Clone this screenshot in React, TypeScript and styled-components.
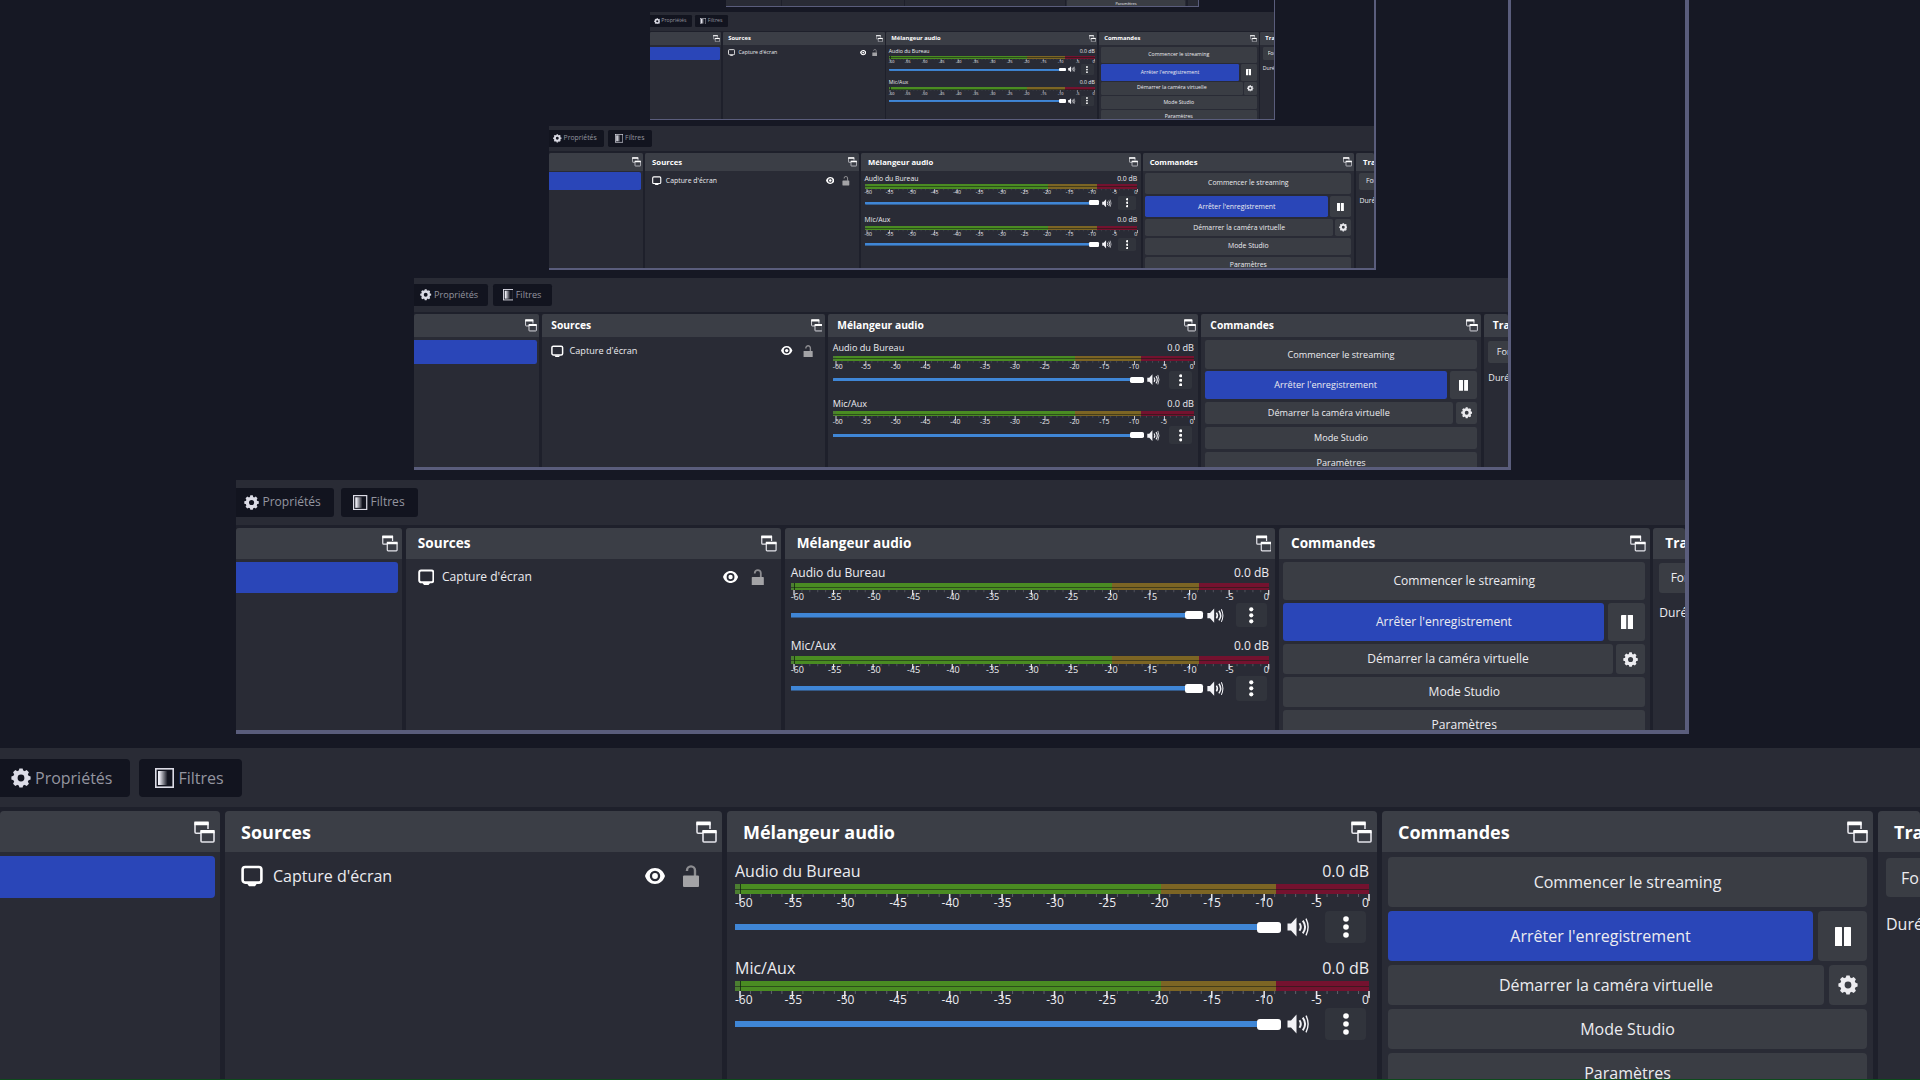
import React, { useId } from "react";
import styled, { createGlobalStyle, css } from "styled-components";

const color = {
  backdrop: "#161824",
  window: "#1e202b",
  panel: "#292b35",
  header: "#3b3e46",
  button: "#3a3d44",
  menuButton: "#31343c",
  toolButton: "#12141f",
  accent: "#2a46b8",
  text: "#ececf0",
  muted: "#94959f",
  frame: "#5a5d7c",
  slider: "#3f86d6",
};

/* Size of the captured screen inside the preview, relative to the screen itself. */
const CAPTURE_RATIO = 0.7547;
const CAPTURE_DEPTH = 5;

const GlobalStyle = createGlobalStyle`
  * { box-sizing: border-box; }
  body {
    margin: 0;
    background: ${color.backdrop};
    color: ${color.text};
    font-family: "Open Sans", "Noto Sans", sans-serif;
    font-size: 16px;
    line-height: 24px;
    overflow: hidden;
  }
  button, input, select { font: inherit; color: inherit; margin: 0; }
`;

const Screen = styled.div<{ $captured?: boolean }>`
  display: flex;
  flex-direction: column;
  flex: none;
  overflow: hidden;
  width: 100%;
  background: ${color.backdrop};
  ${(p) =>
    p.$captured
      ? css`
          zoom: ${CAPTURE_RATIO};
          aspect-ratio: 16 / 9;
        `
      : css`
          height: 100vh;
          border-bottom: 1px solid #0d4a1c;
        `}
`;

const Preview = styled.main`
  flex: 1;
  min-height: 0;
  overflow: hidden;
  display: flex;
  flex-direction: column;
  justify-content: flex-end;
  padding: 0 231px 14px 236px;
`;

const CaptureFrame = styled.div`
  flex: none;
  border: solid ${color.frame};
  border-width: 0 4px 4px 0;
`;

const Toolbar = styled.div`
  flex: none;
  display: flex;
  align-items: center;
  gap: 9px;
  height: 59px;
  background: ${color.panel};
`;

const ToolButton = styled.button<{ $flush?: boolean }>`
  display: flex;
  align-items: center;
  gap: 4px;
  height: 38px;
  padding: 0 18px 0 ${(p) => (p.$flush ? 11 : 16)}px;
  border: 0;
  border-radius: ${(p) => (p.$flush ? "0 4px 4px 0" : "4px")};
  background: ${color.toolButton};
  color: ${color.muted};
  svg { color: #dcdce6; }
`;

const Docks = styled.div`
  flex: none;
  display: grid;
  grid-template-columns:
    minmax(0, 220fr) minmax(0, 497fr) minmax(0, 650fr)
    minmax(0, 491fr) minmax(0, 42fr);
  gap: 5px;
  height: 272px;
  padding-top: 4px;
  background: ${color.window};
`;

const Dock = styled.section`
  min-width: 0;
  overflow: hidden;
  border-radius: 4px 4px 0 0;
  background: ${color.panel};
`;

const DockInner = styled.div<{ $min?: number }>`
  min-width: ${(p) => p.$min ?? 0}px;
`;

const DockHeader = styled.header`
  display: flex;
  align-items: center;
  justify-content: space-between;
  height: 41px;
  padding: 0 5px 0 16px;
  background: ${color.header};
`;

const DockTitle = styled.h2`
  margin: 0;
  font-size: 18px;
  font-weight: 700;
  color: #fff;
  white-space: nowrap;
`;

const IconButton = styled.button`
  display: flex;
  padding: 0;
  border: 0;
  background: none;
`;

const SceneItem = styled.button`
  display: block;
  width: calc(100% - 5px);
  height: 42px;
  margin-top: 4px;
  border: 0;
  border-radius: 0 4px 4px 0;
  background: ${color.accent};
`;

const SourceRow = styled.div`
  display: flex;
  align-items: center;
  height: 40px;
  margin-top: 4px;
  padding: 0 22px 0 16px;
`;

const SourceName = styled.span`
  flex: 1;
  margin-left: 10px;
`;

const SourceTools = styled.div`
  display: flex;
  align-items: center;
  gap: 17px;
`;

const Mixer = styled.div`
  display: flex;
  flex-direction: column;
  gap: 4px;
  padding: 7px 8px 0;
`;

const Channel = styled.div`
  height: 93px;
`;

const ChannelHead = styled.div`
  display: flex;
  justify-content: space-between;
  margin-bottom: 1px;
`;

const Meter = styled.div`
  position: relative;
  display: grid;
  grid-template-columns: 5px 1px 421fr 116fr 93fr;
  height: 10px;
  &::after {
    content: "";
    position: absolute;
    inset: 5px 0 auto;
    height: 1px;
    background: rgba(20, 30, 20, 0.55);
  }
`;

const MeterZone = styled.span<{ $tone: string }>`
  background: ${(p) => p.$tone};
`;

const Ticks = styled.svg`
  display: block;
  width: calc(100% - 5px);
  height: 7px;
  margin: 0 0 -7px 5px;
  overflow: visible;
`;

const Scale = styled.div`
  display: flex;
  justify-content: space-between;
  padding: 1px 0 0 6px;
  font-size: 12px;
  line-height: 16px;
`;

const ScaleMark = styled.span`
  display: flex;
  justify-content: center;
  width: 0;
  &:first-child { justify-content: flex-start; margin-left: -6px; margin-right: 6px; }
  &:last-child { justify-content: flex-end; }
`;

const VolumeRow = styled.div`
  display: flex;
  align-items: center;
  height: 32px;
  padding-right: 3px;
`;

const Volume = styled.input`
  flex: 1;
  min-width: 0;
  height: 12px;
  appearance: none;
  background: linear-gradient(${color.slider}, ${color.slider}) center / 100% 6px no-repeat;
  border-radius: 3px;
  &::-webkit-slider-thumb {
    appearance: none;
    width: 24px;
    height: 11px;
    border-radius: 3px;
    background: #fff;
  }
`;

const MuteButton = styled(IconButton)`
  margin: 0 15px 0 6px;
`;

const MenuButton = styled(IconButton)`
  align-items: center;
  justify-content: center;
  width: 41px;
  height: 32px;
  border-radius: 4px;
  background: ${color.menuButton};
`;

const Commands = styled.div`
  display: flex;
  flex-direction: column;
  gap: 4px;
  padding: 5px 6px 0;
`;

const CommandRow = styled.div`
  display: flex;
  gap: 5px;
`;

const Command = styled.button<{ $tall?: boolean; $active?: boolean }>`
  flex: none;
  height: ${(p) => (p.$tall ? 50 : 40)}px;
  padding: 0;
  border: 0;
  border-radius: 4px;
  background: ${(p) => (p.$active ? color.accent : color.button)};
  ${CommandRow} > &:first-child { flex: 1; }
`;

const SideCommand = styled(Command)<{ $width: number }>`
  display: flex;
  align-items: center;
  justify-content: center;
  width: ${(p) => p.$width}px;
`;

const Transition = styled.div`
  display: flex;
  flex-direction: column;
  gap: 15px;
  padding: 6px 9px 0 8px;
`;

const TransitionSelect = styled.select`
  appearance: none;
  height: 39px;
  padding: 0 15px;
  border: 0;
  border-radius: 4px;
  background: ${color.button};
`;

const Gear = () => (
  <svg width="20" height="20" viewBox="0 0 20 20" fill="currentColor" aria-hidden="true">
    <circle cx="10" cy="10" r="5.6" fill="none" stroke="currentColor" strokeWidth="4.4" />
    {[0, 45, 90, 135, 180, 225, 270, 315].map((a) => (
      <path key={a} d="M7.6 3.2 8.4 0.4h3.2L12.4 3.2z" transform={`rotate(${a} 10 10)`} />
    ))}
  </svg>
);

const FilterIcon = () => {
  const id = useId();
  return (
    <svg width="19" height="20" viewBox="0 0 19 20" aria-hidden="true">
      <defs>
        <linearGradient id={id}>
          <stop offset="0.1" stopColor="#f0f0f8" />
          <stop offset="0.8" stopColor="#12141f" />
        </linearGradient>
      </defs>
      <rect x="0.8" y="0.8" width="17.4" height="18.4" fill="none" stroke="currentColor" strokeWidth="1.6" />
      <rect x="3" y="3" width="12" height="14" fill={`url(#${id})`} />
    </svg>
  );
};

const FloatIcon = () => (
  <svg width="21" height="22" viewBox="0 0 21 22" aria-hidden="true" fill="none" stroke="#e4e4ea" strokeWidth="1.6">
    <path d="M7 12.2H2.2a1.2 1.2 0 0 1-1.2-1.2V2h13v6" />
    <path d="M0.4 2.4h14.2" stroke="#fff" strokeWidth="3.6" />
    <rect x="7" y="10" width="13" height="11" rx="1" />
    <path d="M6.4 10.6h14.2" stroke="#fff" strokeWidth="3.2" />
  </svg>
);

const MonitorIcon = () => (
  <svg width="22" height="22" viewBox="0 0 22 22" aria-hidden="true">
    <rect x="1.6" y="2" width="18.8" height="15.6" rx="2.6" fill="none" stroke="#fff" strokeWidth="2.6" />
    <path d="M6 18.4h10l-2 2.8H8z" fill="#fff" />
  </svg>
);

const EyeIcon = () => (
  <svg width="20" height="16" viewBox="0 0 20 16" aria-hidden="true">
    <path
      fillRule="evenodd"
      fill="#fff"
      d="M10 0C5.200 0 1.600 3.200 0 8c1.600 4.800 5.200 8 10 8s8.400-3.200 10-8c-1.600-4.800-5.200-8-10-8zm0 2.800a5.200 5.200 0 1 1 0 10.400a5.200 5.200 0 0 1 0-10.400z"
    />
    <circle cx="10" cy="8" r="2.900" fill="#fff" />
  </svg>
);

const LockIcon = () => (
  <svg width="18" height="22" viewBox="0 0 18 22" aria-hidden="true">
    <path d="M5 6V5.400a4 4 0 0 1 8 0V11" fill="none" stroke="#8c8c90" strokeWidth="2.400" />
    <rect x="1" y="10.500" width="16" height="11.500" rx="1" fill="#a3a3a6" />
  </svg>
);

const SpeakerIcon = () => (
  <svg width="23" height="20" viewBox="0 0 23 20" aria-hidden="true" fill="none" stroke="#f2f2f6" strokeWidth="2">
    <path d="M0.500 6.500h3.500L9.500 0.500v19L4 13.500H0.500z" fill="#f2f2f6" stroke="none" />
    <path d="M12.500 6.200q2.600 3.800 0 7.600" />
    <path d="M15.800 3.600q4.600 6.400 0 12.800" />
    <path d="M19 1.600q4.200 8.400 0 16.800" strokeWidth="1.400" />
  </svg>
);

const DotsIcon = () => (
  <svg width="6" height="22" viewBox="0 0 6 22" fill="#fff" aria-hidden="true">
    <circle cx="3" cy="3" r="2.800" />
    <circle cx="3" cy="11" r="2.800" />
    <circle cx="3" cy="19" r="2.800" />
  </svg>
);

const PauseIcon = () => (
  <svg width="16" height="19" viewBox="0 0 16 19" fill="#fff" aria-hidden="true">
    <rect width="7" height="19" rx="0.600" />
    <rect x="9" width="7" height="19" rx="0.600" />
  </svg>
);

const marks = [-60, -55, -50, -45, -40, -35, -30, -25, -20, -15, -10, -5, 0];

function Header({ title = "" }: { title?: string }) {
  return (
    <DockHeader>
      <DockTitle>{title}</DockTitle>
      <IconButton aria-label="Détacher">
        <FloatIcon />
      </IconButton>
    </DockHeader>
  );
}

function AudioChannel({ name }: { name: string }) {
  const id = useId();
  return (
    <Channel>
      <ChannelHead>
        <label htmlFor={id}>{name}</label>
        <span>0.0 dB</span>
      </ChannelHead>
      <Meter>
        <MeterZone $tone="#4c7f31" />
        <MeterZone $tone="#1c3a14" />
        <MeterZone $tone="#4a8c22" />
        <MeterZone $tone="#7c6524" />
        <MeterZone $tone="#74122f" />
      </Meter>
      <Ticks viewBox="0 0 600 7" preserveAspectRatio="none" aria-hidden="true">
        {Array.from({ length: 61 }, (_, i) => (
          <path
            key={i}
            d={`M${i * 10} 0v${i % 5 ? 3 : 7}`}
            stroke={i % 5 ? "#5c5e68" : "#e4e4ea"}
            strokeWidth={i % 5 ? 1 : 1.5}
          />
        ))}
      </Ticks>
      <Scale>
        {marks.map((m) => (
          <ScaleMark key={m}>{m}</ScaleMark>
        ))}
      </Scale>
      <VolumeRow>
        <Volume id={id} type="range" min={0} max={100} defaultValue={100} />
        <MuteButton aria-label="Muet">
          <SpeakerIcon />
        </MuteButton>
        <MenuButton aria-label="Options">
          <DotsIcon />
        </MenuButton>
      </VolumeRow>
    </Channel>
  );
}

function TransitionPanel() {
  return (
    <Transition>
      <TransitionSelect aria-label="Transition" defaultValue="Fondu">
        <option>Fondu</option>
        <option>Coupure</option>
      </TransitionSelect>
      <span>Durée</span>
    </Transition>
  );
}

function ObsScreen({ depth = 0 }: { depth?: number }) {
  return (
    <Screen $captured={depth > 0}>
      <Preview>
        {depth < CAPTURE_DEPTH && (
          <CaptureFrame>
            <ObsScreen depth={depth + 1} />
          </CaptureFrame>
        )}
      </Preview>
      <Toolbar>
        <ToolButton $flush>
          <Gear />
          Propriétés
        </ToolButton>
        <ToolButton>
          <FilterIcon />
          Filtres
        </ToolButton>
      </Toolbar>
      <Docks>
        <Dock>
          <Header />
          <SceneItem aria-label="Scène" />
        </Dock>
        <Dock>
          <Header title="Sources" />
          <SourceRow>
            <MonitorIcon />
            <SourceName>Capture d'écran</SourceName>
            <SourceTools>
              <IconButton aria-label="Visible">
                <EyeIcon />
              </IconButton>
              <IconButton aria-label="Verrouiller">
                <LockIcon />
              </IconButton>
            </SourceTools>
          </SourceRow>
        </Dock>
        <Dock>
          <Header title="Mélangeur audio" />
          <Mixer>
            <AudioChannel name="Audio du Bureau" />
            <AudioChannel name="Mic/Aux" />
          </Mixer>
        </Dock>
        <Dock>
          <Header title="Commandes" />
          <Commands>
            <Command $tall>Commencer le streaming</Command>
            <CommandRow>
              <Command $tall $active>
                Arrêter l'enregistrement
              </Command>
              <SideCommand $tall $width={49} aria-label="Pause">
                <PauseIcon />
              </SideCommand>
            </CommandRow>
            <CommandRow>
              <Command>Démarrer la caméra virtuelle</Command>
              <SideCommand $width={38} aria-label="Configurer">
                <Gear />
              </SideCommand>
            </CommandRow>
            <Command>Mode Studio</Command>
            <Command>Paramètres</Command>
          </Commands>
        </Dock>
        <Dock>
          <DockInner $min={260}>
            <Header title="Transitions de scène" />
            <TransitionPanel />
          </DockInner>
        </Dock>
      </Docks>
    </Screen>
  );
}

export default function App() {
  return (
    <>
      <GlobalStyle />
      <ObsScreen />
    </>
  );
}
